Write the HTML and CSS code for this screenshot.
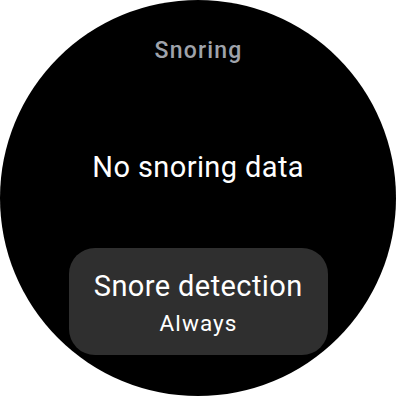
FILE: index.html
```html
<!DOCTYPE html>
<html>
<head>
<meta charset="utf-8">
<link rel="stylesheet" href="styles.css">
</head>
<body>
<div class="watch">
  <div class="title">Snoring</div>
  <div class="message">No snoring data</div>
  <div class="chip">
    <div class="chip-label">Snore detection</div>
    <div class="chip-value">Always</div>
  </div>
</div>
</body>
</html>
```
FILE: styles.css
```css
html, body {
  margin: 0;
  padding: 0;
  background: #ffffff;
}
.watch {
  width: 396px;
  height: 396px;
  border-radius: 50%;
  background: #000000;
  display: flex;
  flex-direction: column;
  align-items: center;
  box-sizing: border-box;
  padding-top: 38.4px;
  font-family: Roboto, "Noto Sans", sans-serif;
  overflow: hidden;
}
.title {
  font-size: 23px;
  line-height: 26px;
  font-weight: 500;
  letter-spacing: 1.2px;
  text-indent: 1.2px;
  color: #9fa3ab;
}
.message {
  margin-top: 85.7px;
  font-size: 29px;
  line-height: 34px;
  letter-spacing: 0.4px;
  text-indent: 0.4px;
  color: #ffffff;
}
.chip {
  margin-top: 63.9px;
  width: 259px;
  height: 107px;
  box-sizing: border-box;
  padding-top: 21.1px;
  border-radius: 26px;
  background: #2f2f2f;
  display: flex;
  flex-direction: column;
  align-items: center;
  color: #ffffff;
}
.chip-label {
  font-size: 29px;
  line-height: 34px;
  letter-spacing: 0.4px;
  text-indent: 0.4px;
}
.chip-value {
  margin-top: 6.9px;
  font-size: 22.5px;
  line-height: 26px;
  letter-spacing: 1.1px;
  text-indent: 1.1px;
}
```
